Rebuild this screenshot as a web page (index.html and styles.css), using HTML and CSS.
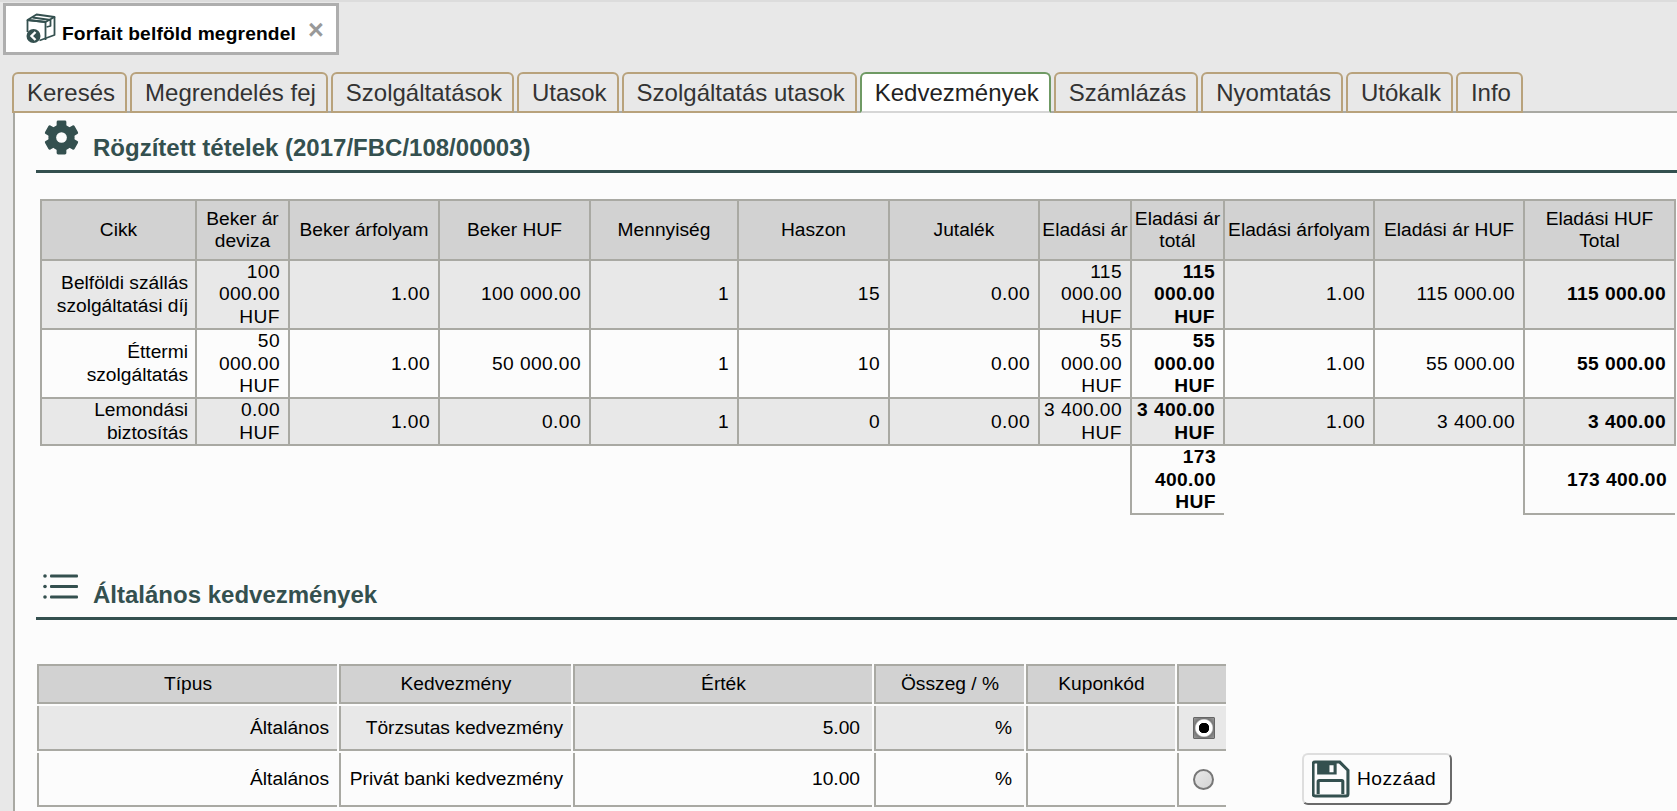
FILE: index.html
```html
<!DOCTYPE html>
<html lang="hu">
<head>
<meta charset="utf-8">
<title>Forfait belföld megrendel</title>
<link rel="stylesheet" href="styles.css">
</head>
<body>
<div class="doc-bar">
  <div class="doc-tab">
    <svg class="box-icon" viewBox="0 0 30 30" aria-hidden="true">
      <g fill="none" stroke="#34504f" stroke-width="1.8" stroke-linejoin="round">
        <path d="M2 7 L11 1.5 L29 4 L20 9 Z"/>
        <path d="M2 7 V19"/>
        <path d="M2 7 L20 9 V27"/>
        <path d="M29 4 V22 L14 27.5"/>
        <path d="M7 4.5 L25 7 V13 L21 14"/>
      </g>
      <circle cx="8" cy="23" r="7" fill="#34504f"/>
      <path d="M10 19 L6 23 L10 27" fill="none" stroke="#fff" stroke-width="2.4"/>
    </svg>
    <span class="doc-title">Forfait belföld megrendel</span>
    <span class="doc-close">×</span>
  </div>
</div>
<nav class="tabs">
  <a class="tab">Keresés</a>
  <a class="tab">Megrendelés fej</a>
  <a class="tab">Szolgáltatások</a>
  <a class="tab">Utasok</a>
  <a class="tab">Szolgáltatás utasok</a>
  <a class="tab active">Kedvezmények</a>
  <a class="tab">Számlázás</a>
  <a class="tab">Nyomtatás</a>
  <a class="tab">Utókalk</a>
  <a class="tab">Info</a>
</nav>
<main class="panel">
  <header class="section-head first">
    <svg class="gear" viewBox="0 0 36 36" aria-hidden="true">
      <g fill="#34504f">
        <rect x="13" y="0.5" width="10" height="35" rx="1.5"/>
        <rect x="13" y="0.5" width="10" height="35" rx="1.5" transform="rotate(60 18 18)"/>
        <rect x="13" y="0.5" width="10" height="35" rx="1.5" transform="rotate(120 18 18)"/>
      </g>
      <circle cx="18" cy="18" r="9.5" fill="none" stroke="#34504f" stroke-width="8"/>
      <circle cx="18" cy="18" r="5.5" fill="#fcfcfc"/>
    </svg>
    <h2 class="section-title">Rögzített tételek (2017/FBC/108/00003)</h2>
  </header>
  <table class="items">
    <colgroup>
      <col class="c155"><col class="c93"><col class="c150"><col class="c151"><col class="c148"><col class="c151"><col class="c150"><col class="c92"><col class="c93"><col class="c150"><col class="c150"><col class="c151">
    </colgroup>
    <thead>
      <tr><th>Cikk</th><th>Beker ár deviza</th><th>Beker árfolyam</th><th>Beker HUF</th><th>Mennyiség</th><th>Haszon</th><th>Jutalék</th><th>Eladási ár</th><th>Eladási ár totál</th><th>Eladási árfolyam</th><th>Eladási ár HUF</th><th>Eladási HUF Total</th></tr>
    </thead>
    <tbody>
      <tr class="odd"><td>Belföldi szállás szolgáltatási díj</td><td>100 000.00 HUF</td><td>1.00</td><td>100 000.00</td><td>1</td><td>15</td><td>0.00</td><td>115 000.00 HUF</td><td class="b">115 000.00 HUF</td><td>1.00</td><td>115 000.00</td><td class="b">115 000.00</td></tr>
      <tr><td>Éttermi szolgáltatás</td><td>50 000.00 HUF</td><td>1.00</td><td>50 000.00</td><td>1</td><td>10</td><td>0.00</td><td>55 000.00 HUF</td><td class="b">55 000.00 HUF</td><td>1.00</td><td>55 000.00</td><td class="b">55 000.00</td></tr>
      <tr class="odd"><td>Lemondási biztosítás</td><td>0.00 HUF</td><td>1.00</td><td>0.00</td><td>1</td><td>0</td><td>0.00</td><td>3 400.00 HUF</td><td class="b">3 400.00 HUF</td><td>1.00</td><td>3 400.00</td><td class="b">3 400.00</td></tr>
    </tbody>
    <tfoot>
      <tr><td colspan="8" class="blank"></td><td class="b total">173 400.00 HUF</td><td colspan="2" class="blank"></td><td class="b total">173 400.00</td></tr>
    </tfoot>
  </table>
  <header class="section-head second">
    <svg class="list-icon" viewBox="0 0 36 27" aria-hidden="true">
      <g fill="#34504f">
        <circle cx="2" cy="3" r="1.8"/><rect x="7" y="1.5" width="28" height="3" rx="1"/>
        <circle cx="2" cy="13.5" r="1.8"/><rect x="7" y="12" width="28" height="3" rx="1"/>
        <circle cx="2" cy="24" r="1.8"/><rect x="7" y="22.5" width="28" height="3" rx="1"/>
      </g>
    </svg>
    <h2 class="section-title">Általános kedvezmények</h2>
  </header>
  <div class="discount-row">
    <table class="discounts">
      <colgroup>
        <col class="d300"><col class="d232"><col class="d299"><col class="d150"><col class="d149"><col class="d49">
      </colgroup>
      <thead>
        <tr><th>Típus</th><th>Kedvezmény</th><th>Érték</th><th>Összeg / %</th><th>Kuponkód</th><th></th></tr>
      </thead>
      <tbody>
        <tr class="odd r1"><td>Általános</td><td>Törzsutas kedvezmény</td><td class="wide-pad">5.00</td><td class="wide-pad">%</td><td></td><td class="ctr"><input class="radio" type="radio" name="disc" checked></td></tr>
        <tr class="r2"><td>Általános</td><td>Privát banki kedvezmény</td><td class="wide-pad">10.00</td><td class="wide-pad">%</td><td></td><td class="ctr"><input class="radio" type="radio" name="disc"></td></tr>
      </tbody>
    </table>
    <button class="add-btn" type="button">
      <svg class="save-icon" viewBox="0 0 37 37" aria-hidden="true">
        <path d="M3 2 H27 L35 10 V33 a2 2 0 0 1 -2 2 H3 a2 2 0 0 1 -2 -2 V4 a2 2 0 0 1 2 -2 Z" fill="none" stroke="#34504f" stroke-width="3"/>
        <path d="M5 3 H24 V14 H5 Z M17 5 V12 H21 V5 Z" fill="#34504f" fill-rule="evenodd"/>
        <path d="M6 33 V21 a1 1 0 0 1 1 -1 H29 a1 1 0 0 1 1 1 V33" fill="none" stroke="#34504f" stroke-width="3"/>
      </svg>
      <span class="btn-label">Hozzáad</span>
    </button>
  </div>
</main>
</body>
</html>
```
FILE: styles.css
```css
* { box-sizing: border-box; }
html, body { height: 100%; }
body {
  margin: 0;
  background: #e8e8e8;
  font-family: "Liberation Sans", Arial, sans-serif;
  font-size: 19.2px;
  color: #000;
  overflow: hidden;
}
.doc-bar { padding: 1px 0 0 3px; border-top: 2px solid #dcdcdc; }
.doc-tab {
  width: 336px;
  height: 52px;
  background: #fff;
  border: 3px solid #aeaeae;
  display: flex;
  padding-left: 19px;
}
.box-icon { width: 31px; height: 30px; margin-top: 7px; flex: none; }
.doc-title { margin: 17px 0 0 6px; font-weight: 700; line-height: 22px; letter-spacing: 0.15px; white-space: nowrap; }
.doc-close { margin: 11px 0 0 12px; font-size: 27px; line-height: 27px; font-weight: 700; color: #999; }

.tabs {
  display: flex;
  gap: 3px;
  margin: 17px 0 -2px 12px;
  position: relative;
  z-index: 1;
}
.tab {
  height: 41px;
  padding: 0 10px 0 13px;
  font-size: 24px;
  line-height: 38px;
  color: #333;
  background: #e8e8e8;
  border: 2px solid #b8a27c;
  border-radius: 6px 6px 0 0;
  white-space: nowrap;
}
.tab.active {
  background: #fff;
  border-color: #6f9a64;
  border-bottom: 2px solid #d6d6d6;
  color: #222;
}

.panel {
  margin-left: 13px;
  height: 700px;
  background: #fcfcfc;
  border-left: 2px solid #a9a9a3;
  border-top: 2px solid #a9a9a3;
  padding: 0 0 0 21px;
}
.section-head {
  display: flex;
  border-bottom: 3px solid #34504f;
  padding-left: 8px;
}
.section-head.first { height: 60px; margin-bottom: 26px; }
.section-head.second { height: 59px; margin-top: 46px; }
.gear { width: 35px; height: 35px; margin-top: 7px; flex: none; }
.list-icon { width: 36px; height: 27px; margin-top: 12px; margin-left: -1px; flex: none; }
.section-title {
  margin: 0;
  align-self: flex-end;
  color: #34504f;
  font-size: 24px;
  line-height: 27px;
  font-weight: 700;
  padding: 0 0 9px 14px;
  white-space: nowrap;
}

.items {
  border-collapse: collapse;
  table-layout: fixed;
  width: 1634px;
  margin-left: 4px;
  line-height: 22.4px;
}
.c155 { width: 155px; }
.c148 { width: 148px; }
.c150 { width: 150px; }
.c151 { width: 151px; }
.c92 { width: 92px; }
.c93 { width: 93px; }
.items th, .items td { border: 2px solid #a9a9a3; }
.items th {
  height: 60px;
  background: #d2d2d2;
  font-weight: 400;
  padding: 0 1px;
  text-align: center;
}
.items td { padding: 0 8px 0 2px; text-align: right; vertical-align: middle; letter-spacing: 0.4px; }
.items td:first-child { padding-right: 7px; letter-spacing: 0; }
.odd td { background: #e8e8e8; }
.items .b { font-weight: 700; }
.items .blank { border: 0; border-top: 2px solid #a9a9a3; }
.items .total { border-right: 0; }

.discount-row { display: flex; align-items: flex-start; margin-top: 44px; margin-left: -1px; }
.discounts {
  border-collapse: separate;
  border-spacing: 2px;
  table-layout: fixed;
  width: 1193px;
  flex: none;
  margin-top: -2px;
}
.d300 { width: 300px; }
.d232 { width: 232px; }
.d299 { width: 299px; }
.d150 { width: 150px; }
.d149 { width: 149px; }
.d49 { width: 49px; }
.discounts th {
  height: 40px;
  background: #d2d2d2;
  font-weight: 400;
  padding: 0;
  border-top: 2px solid #a9a9a3;
  border-left: 2px solid #a9a9a3;
  border-bottom: 2px solid #a9a9a3;
}
.discounts td {
  padding: 0 8px 0 2px;
  text-align: right;
  border-left: 2px solid #a9a9a3;
  border-bottom: 2px solid #a9a9a3;
}
.discounts .wide-pad { padding-right: 12px; }
.discounts .ctr { text-align: center; padding: 0; }
.r1 td { height: 45px; }
.r2 td { height: 54px; }
.radio {
  appearance: none;
  display: block;
  margin: 0 auto;
  width: 21px;
  height: 21px;
  border-radius: 50%;
  border: 2px solid #777;
  background: linear-gradient(135deg, #e8e8e8, #d4d4d4);
  position: relative;
  left: 1px;
}
.radio:checked {
  border-radius: 1px;
  border: 1px solid #666;
  width: 22px;
  height: 22px;
  background: radial-gradient(circle at center, #000 0 5px, #fff 5.5px 8px, #777 9.5px, #999 100%);
}

.add-btn {
  flex: none;
  display: flex;
  align-items: center;
  width: 150px;
  height: 52px;
  margin: 89px 0 0 74px;
  padding: 0 0 0 8px;
  font: inherit;
  color: #000;
  background: #fcfcfc;
  border: 2px solid #dedede;
  border-right-color: #6a6a6a;
  border-bottom-color: #6a6a6a;
  border-radius: 6px;
}
.save-icon { width: 38px; height: 38px; margin-right: 7px; flex: none; }
.btn-label { letter-spacing: 0.5px; }
```
